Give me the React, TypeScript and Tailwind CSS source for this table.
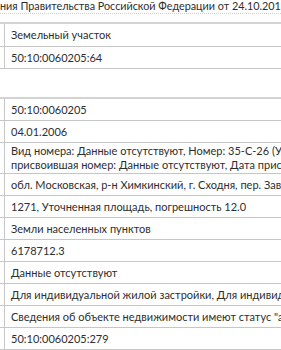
import React from "react";

const Row = ({ children, h = "h-[21px]" }: { children: React.ReactNode; h?: string }) => (
  <div className="flex border-b border-[#c6c6c6]">
    <div className="w-[5px] shrink-0 border-r border-[#c6c6c6]" />
    <div className={`${h} flex items-center pl-[6px] whitespace-nowrap`}>{children}</div>
  </div>
);

export default function App() {
  return (
    <div className="w-[281px] h-[350px] overflow-hidden bg-white text-[#2e2e2e] text-[11px] leading-[14px] font-['Lato','Noto_Sans',sans-serif]">
      <div className="h-[14px] -mt-[1px] whitespace-nowrap text-[10.8px] leading-[14px]">
        ния Правительства Российской Федерации от 24.10.2015
      </div>
      <div className="border-b border-dotted border-[#d0d0d0]" />
      <div className="mt-[8px] border-t-2 border-[#d3d3d3]">
        <Row h="h-[22px]">Земельный участок</Row>
        <Row>50:10:0060205:64</Row>
      </div>
      <div className="mt-[28px] border-t-2 border-[#d3d3d3]">
        <Row>50:10:0060205</Row>
        <Row>04.01.2006</Row>
        <div className="flex border-b border-[#c6c6c6]">
          <div className="w-[5px] shrink-0 border-r border-[#c6c6c6]" />
          <div className="pl-[6px] pt-[1px] whitespace-nowrap h-[30px]">
            <div>Вид номера: Данные отсутствуют, Номер: 35-С-26 (Учетный номер), Орган</div>
            <div>присвоившая номер: Данные отсутствуют, Дата присвоения</div>
          </div>
        </div>
        <Row>обл. Московская, р-н Химкинский, г. Сходня, пер. Заводской</Row>
        <Row>1271, Уточненная площадь, погрешность 12.0</Row>
        <Row>Земли населенных пунктов</Row>
        <Row>6178712.3</Row>
        <Row>Данные отсутствуют</Row>
        <Row>Для индивидуальной жилой застройки, Для индивидуального</Row>
        <Row>Сведения об объекте недвижимости имеют статус "актуальные"</Row>
        <Row>50:10:0060205:279</Row>
      </div>
    </div>
  );
}
